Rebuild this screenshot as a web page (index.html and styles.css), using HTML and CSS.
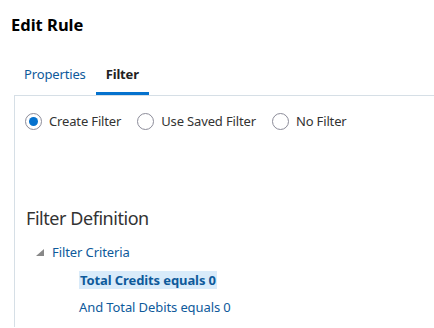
FILE: index.html
```html
<!DOCTYPE html>
<html>
<head>
  <title>Edit Rule</title>
  <link rel="stylesheet" href="styles.css">
</head>
<body>
  <div class="edit-rule">
    <h1 class="dialog-title">Edit Rule</h1>

    <div class="tab-bar">
      <div class="tab">Properties</div>
      <div class="tab selected">Filter</div>
    </div>

    <div class="tab-panel">
      <div class="radio-set">
        <label class="radio-option">
          <span class="radio checked"></span>
          Create Filter
        </label>
        <label class="radio-option">
          <span class="radio"></span>
          Use Saved Filter
        </label>
        <label class="radio-option">
          <span class="radio"></span>
          No Filter
        </label>
      </div>

      <h2 class="section-title">Filter Definition</h2>

      <div class="filter-tree">
        <div class="tree-node">
          <span class="tree-toggle"></span>
          <span class="tree-label">Filter Criteria</span>
        </div>
        <div class="tree-children">
          <div class="tree-leaf selected"><span>Total Credits equals 0</span></div>
          <div class="tree-leaf"><span>And Total Debits equals 0</span></div>
        </div>
      </div>
    </div>
  </div>
</body>
</html>
```

FILE: styles.css
```css
body {
  margin: 0;
  font-family: "Noto Sans", "Open Sans", sans-serif;
  color: #333;
  background: #fff;
}

.dialog-title {
  margin: 0;
  padding: 14px 0 0 11px;
  font-size: 16.5px;
  font-weight: bold;
  color: #000;
  line-height: 22px;
}

.tab-bar {
  display: flex;
  margin: 28px 0 0 14px;
}

.tab {
  padding: 0 10px 8px;
  font-size: 13px;
  letter-spacing: -0.15px;
  line-height: 20px;
  color: #0e5a9b;
  border-bottom: 3px solid transparent;
}

.tab.selected {
  font-weight: bold;
  color: #222;
  border-bottom-color: #0572ce;
}

.tab-panel {
  margin-left: 14px;
  border-top: 1px solid #d6dfe6;
  border-left: 1px solid #d6dfe6;
  padding: 16px 0 0 10px;
  height: 215px;
}

.radio-set {
  display: flex;
  gap: 16px;
}

.radio-option {
  display: flex;
  align-items: center;
  gap: 7px;
  font-size: 13px;
  letter-spacing: -0.15px;
  line-height: 18px;
  color: #333;
}

.radio {
  box-sizing: border-box;
  width: 17px;
  height: 17px;
  border: 1px solid #8c8c99;
  border-radius: 50%;
  display: flex;
  align-items: center;
  justify-content: center;
}

.radio.checked::after {
  content: "";
  width: 9px;
  height: 9px;
  border-radius: 50%;
  background: #0572ce;
}

.section-title {
  margin: 76px 0 0 1px;
  font-size: 18px;
  letter-spacing: -0.45px;
  font-weight: normal;
  line-height: 24px;
  color: #333;
}

.filter-tree {
  margin-top: 12px;
  font-size: 13px;
  letter-spacing: -0.1px;
  color: #0e5a9b;
}

.tree-node {
  display: flex;
  align-items: center;
  gap: 8px;
  padding-left: 11px;
  line-height: 20px;
}

.tree-toggle {
  width: 0;
  height: 0;
  border-left: 8px solid transparent;
  border-bottom: 7px solid #888;
}

.tree-children {
  padding: 9px 0 0 54px;
}

.tree-leaf {
  line-height: 18px;
  margin-bottom: 9px;
}

.tree-leaf.selected span {
  font-weight: bold;
  background: #d9ebfa;
  padding: 0 1px;
}
```
